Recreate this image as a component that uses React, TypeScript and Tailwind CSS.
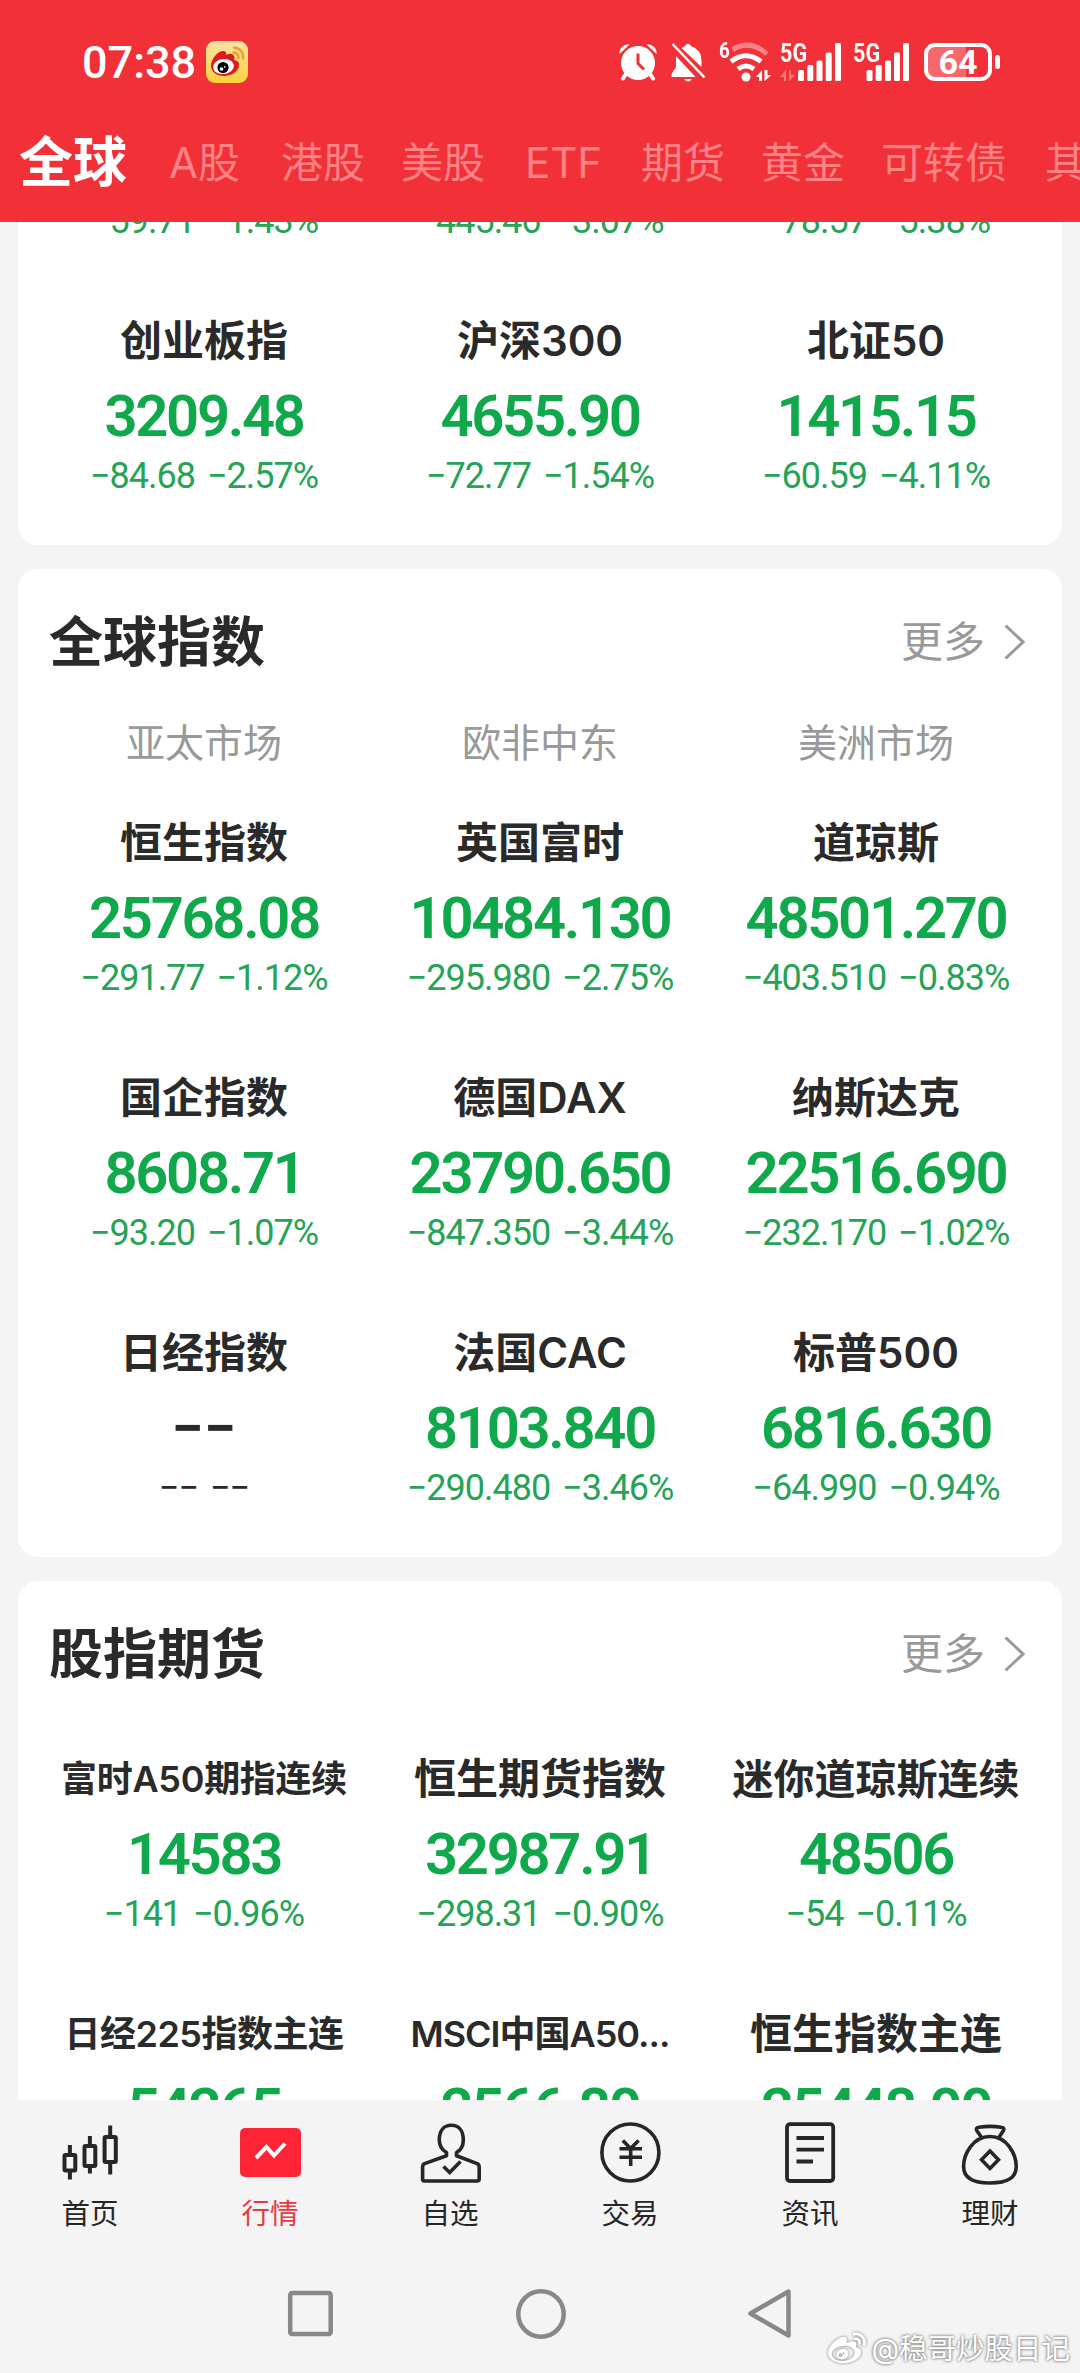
import type { ReactNode } from 'react'
import { FaWeibo } from 'react-icons/fa'

type Quote = {
  name: string
  price: string
  change: string
  nameClass?: string
  flat?: boolean
}

type NavItem = {
  label: string
  icon: ReactNode
  active?: boolean
}

const tabs = [
  { label: 'A股', className: 'w-[112px]' },
  { label: '港股', className: 'w-[120px]' },
  { label: '美股', className: 'w-[124px]' },
  { label: 'ETF', className: 'w-[116px]' },
  { label: '期货', className: 'w-[120px]' },
  { label: '黄金', className: 'w-[120px]' },
  { label: '可转债', className: 'w-[164px]' },
  { label: '其', className: 'w-[42px]' },
]

// row scrolled under the header, only its last line is visible
const hiddenRowChanges = ['−59.71 −1.43%', '−445.46 −3.07%', '−78.57 −5.38%']

const chinaQuotes: Quote[] = [
  { name: '创业板指', price: '3209.48', change: '−84.68 −2.57%' },
  { name: '沪深300', price: '4655.90', change: '−72.77 −1.54%' },
  { name: '北证50', price: '1415.15', change: '−60.59 −4.11%' },
]

const globalQuotes: Quote[] = [
  { name: '恒生指数', price: '25768.08', change: '−291.77 −1.12%' },
  { name: '英国富时', price: '10484.130', change: '−295.980 −2.75%' },
  { name: '道琼斯', price: '48501.270', change: '−403.510 −0.83%' },
  { name: '国企指数', price: '8608.71', change: '−93.20 −1.07%' },
  { name: '德国DAX', price: '23790.650', change: '−847.350 −3.44%' },
  { name: '纳斯达克', price: '22516.690', change: '−232.170 −1.02%' },
  { name: '日经指数', price: '−−', change: '−− −−', flat: true },
  { name: '法国CAC', price: '8103.840', change: '−290.480 −3.46%' },
  { name: '标普500', price: '6816.630', change: '−64.990 −0.94%' },
]

const futuresQuotes: Quote[] = [
  { name: '富时A50期指连续', price: '14583', change: '−141 −0.96%', nameClass: 'text-[36px] tracking-[-0.3px]' },
  { name: '恒生期货指数', price: '32987.91', change: '−298.31 −0.90%' },
  { name: '迷你道琼斯连续', price: '48506', change: '−54 −0.11%', nameClass: 'text-[41px]' },
  { name: '日经225指数主连', price: '54265', change: '', nameClass: 'text-[36px] tracking-[-0.5px]' },
  { name: 'MSCI中国A50...', price: '2566.80', change: '', nameClass: 'text-[36px] tracking-[-1px]' },
  { name: '恒生指数主连', price: '25448.00', change: '' },
]

const navItems: NavItem[] = [
  {
    label: '首页',
    icon: (
      <g strokeWidth="4">
        <rect x="7.5" y="35" width="10.8" height="15.5" rx="1" />
        <path d="M12.9 25v9M12.9 51v8.5" />
        <rect x="27.5" y="26" width="10.8" height="20" rx="1" />
        <path d="M32.9 16v9M32.9 47v6.5" />
        <rect x="47.6" y="17" width="11.2" height="25" rx="1" />
        <path d="M53.2 5.5V16M53.2 43v11.5" />
      </g>
    ),
  },
  {
    label: '行情',
    active: true,
    icon: (
      <g>
        <rect x="3" y="8" width="61" height="49" rx="5" fill="#ff2336" stroke="none" />
        <path d="M19 38L29.5 27l7.5 8.5L48 23.5" stroke="#fff" strokeWidth="4" />
      </g>
    ),
  },
  {
    label: '自选',
    icon: (
      <g strokeWidth="3.6" strokeLinejoin="round">
        <path d="M29.5 32.5v3.2L7.6 43.6Q5.6 44.6 5.6 47V59q0 2 2 2h52.6q2 0 2-2V47q0-2.4-2-3.4L39.5 35.7v-3.2C44 30 46.3 25 46.3 20C46.3 11 42 5.3 34.3 5.3S22.3 11 22.3 20C22.3 25 25 30 29.5 32.5Z" />
        <path d="M26.5 46.5L32.7 52.5L43.5 41.5" strokeLinejoin="miter" />
      </g>
    ),
  },
  {
    label: '交易',
    icon: (
      <g strokeWidth="3.6">
        <circle cx="33.4" cy="32.5" r="28.5" />
        <path d="M25.8 20.5l7.8 8l8-8M22.5 28.7h22.5M22.5 37.2h22.5M33.7 28v18" />
      </g>
    ),
  },
  {
    label: '资讯',
    icon: (
      <g strokeWidth="3.8">
        <rect x="10" y="4.2" width="46.2" height="56.8" rx="3" />
        <path d="M19.5 18H47M19.5 29.7H47M19.5 41.5H36" />
      </g>
    ),
  },
  {
    label: '理财',
    icon: (
      <g strokeWidth="3.6" strokeLinejoin="round">
        <path d="M25 18L19.7 10.5Q18.5 7.5 22 7.2Q33 5.5 44 7.2Q47.8 7.5 46.5 10.5L41.5 18" />
        <path d="M33 16.5C16 16.5 6.6 34 6.6 46.5C6.6 59 17 63 33 63S59.2 59 59.2 46.5C59.2 34 50 16.5 33 16.5Z" />
        <path d="M33 31L41.5 39.8L33 48.5L24.5 39.8Z" strokeLinejoin="miter" />
      </g>
    ),
  },
]

function SignalBars({ data }: { data?: boolean }) {
  const x = data ? [18, 27.3, 36.5, 45.7, 55] : [13.5, 22.7, 32, 41, 50]
  return (
    <div className={`relative h-10 ${data ? 'w-16' : 'w-[58px]'}`}>
      <svg width="64" height="40" viewBox="0 0 64 40" fill="#fff">
        {data && <path d="M6 39V28L0 35h4v4zM9 28v11l6-6h-4v-5z" opacity="0.35" />}
        <rect x={x[0]} y="28" width="6" height="11" rx="1.5" />
        <rect x={x[1]} y="23" width="6" height="16" rx="1.5" />
        <rect x={x[2]} y="18.5" width="6" height="20.5" rx="1.5" />
        <rect x={x[3]} y="10.5" width="6" height="28.5" rx="1.5" />
        <rect x={x[4]} y="1" width="6" height="38" rx="1.5" />
      </svg>
      <span className="absolute -top-1 left-0 origin-left scale-x-[0.83] font-['Roboto',sans-serif] text-[26px] font-bold leading-[30px] text-white">
        5G
      </span>
    </div>
  )
}

function StatusBar() {
  return (
    <div className="flex h-[124px] items-center pl-[82px] pr-[80px]">
      <span className="font-['Roboto',sans-serif] text-[45px] font-medium leading-none text-white">07:38</span>
      <svg width="42" height="42" viewBox="0 0 42 42" className="ml-[10px]">
        <defs>
          <linearGradient id="weiboBg" x1="0" y1="0" x2="0" y2="1">
            <stop offset="0" stopColor="#fbe3a6" />
            <stop offset="1" stopColor="#fdd23a" />
          </linearGradient>
        </defs>
        <rect width="42" height="42" rx="9" fill="url(#weiboBg)" />
        <path d="M5 25C5 17 13 9 18 10q3 1 2 4q6-3 8 1q1 2 0 4q6 1 5 6c-1 6-8 10-15 10S5 31 5 25Z" fill="#e0191d" />
        <ellipse cx="17.5" cy="25.5" rx="10.5" ry="7.5" fill="#fff" transform="rotate(-8 17.5 25.5)" />
        <circle cx="17" cy="26.5" r="5.6" fill="#000" />
        <circle cx="15.5" cy="28" r="1.8" fill="#fff" />
        <circle cx="18.8" cy="25.8" r="0.9" fill="#fff" />
        <path d="M28 6.5q9.5 1 9 11M27.5 11.5q5 .5 5 5.5" stroke="#f0a030" strokeWidth="2.5" fill="none" strokeLinecap="round" />
      </svg>
      <div className="ml-auto flex items-center">
        <svg width="38" height="38" viewBox="0 0 38 38" fill="#fff">
          <circle cx="19" cy="20" r="17" />
          <path d="M0.5 11Q0 7 3 4Q6.5 .5 10.5 1.5zM37.5 11Q38 7 35 4Q31.5 .5 27.5 1.5z" />
          <path d="M7 31l-3 4.5M31 31l3 4.5" stroke="#fff" strokeWidth="4" strokeLinecap="round" />
          <path d="M19 10.5V20.5l6 6" stroke="#f23037" strokeWidth="3" fill="none" />
        </svg>
        <svg width="36" height="40" viewBox="0 0 36 40" fill="#fff" className="ml-[14px]">
          <path d="M5 14v11L0.5 32v3h24zM10.5 6Q12.5 4.8 14 4q3-4.500 6 0Q30.5 7.5 30.5 19v6z" />
          <path d="M13 37h8q-4 5-8 0z" />
          <path d="M1.5 2l32 33.5" stroke="#fff" strokeWidth="2.5" />
        </svg>
        <div className="relative ml-3 h-10 w-[52px]">
          <svg width="54" height="40" viewBox="0 0 54 40" fill="none" stroke="#fff">
            <path d="M13.5 7.5Q31-3 48 12" strokeWidth="5" opacity="0.4" />
            <path d="M12 19.5Q27 8 42 19.5" strokeWidth="5" />
            <path d="M19 27Q27 21 35 27" strokeWidth="5" />
            <circle cx="27" cy="35" r="4.5" fill="#fff" stroke="none" />
            <path d="M43 39V28l-6 7h3v4zM45.5 28v11l7-6h-4v-5z" fill="#fff" stroke="none" />
          </svg>
          <span className="absolute -top-[5px] left-0 origin-left scale-x-[0.85] font-['Roboto',sans-serif] text-[22px] font-bold leading-[28px] text-white">
            6
          </span>
        </div>
        <div className="ml-[9px]">
          <SignalBars data />
        </div>
        <div className="ml-[9px]">
          <SignalBars />
        </div>
        <div className="ml-[13px] flex items-center gap-[3px]">
          <div className="flex h-[38px] w-[68px] items-center justify-center rounded-[11px] border-4 border-white bg-[linear-gradient(90deg,#f7686d_64%,transparent_64%)] font-['Roboto',sans-serif] text-[34px] font-bold leading-none text-white">
            64
          </div>
          <div className="h-[14px] w-[5px] rounded-sm bg-white" />
        </div>
      </div>
    </div>
  )
}

function Change({ value, flat }: { value: string; flat?: boolean }) {
  return (
    <div
      className={`flex h-[30px] items-center justify-center whitespace-nowrap pt-px font-['Roboto',sans-serif] text-[36px] leading-none tracking-[-1px] [word-spacing:4px] ${flat ? 'text-[#2a2a2a]' : 'text-[#26a356]'}`}
    >
      {value}
    </div>
  )
}

function QuoteCell({ quote }: { quote: Quote }) {
  return (
    <div className="flex h-[180px] flex-col items-center whitespace-nowrap">
      <div className={`flex h-[60px] items-center pt-[2px] font-semibold leading-none text-[#2a2a2a] ${quote.nameClass ?? 'text-[42px]'}`}>
        {quote.name}
      </div>
      <div
        className={`flex h-[90px] items-center pt-[2px] font-['Roboto',sans-serif] text-[58px] font-semibold leading-none ${quote.flat ? 'text-[#2a2a2a]' : 'tracking-[-2.3px] text-[#0fa84b]'}`}
      >
        {quote.price}
      </div>
      {quote.change && <Change value={quote.change} flat={quote.flat} />}
    </div>
  )
}

function QuoteGrid({ quotes }: { quotes: Quote[] }) {
  return (
    <div className="grid grid-cols-3 gap-y-[75px]">
      {quotes.map((q) => (
        <QuoteCell key={q.name} quote={q} />
      ))}
    </div>
  )
}

function SectionHeader({ title }: { title: string }) {
  return (
    <div className="flex h-[146px] items-center justify-between pl-[13px] pr-[19px]">
      <h2 className="pt-[2px] text-[54px] font-semibold leading-none text-[#2a2a2a]">{title}</h2>
      <div className="flex items-center text-[42px] leading-none text-[#999]">
        更多
        <svg width="21" height="36" viewBox="0 0 21 36" fill="none" stroke="#999" strokeWidth="3" className="ml-[19px]">
          <path d="M1.5 1.5L19 18L1.5 34.5" />
        </svg>
      </div>
    </div>
  )
}

export default function App() {
  return (
    <div className="relative flex h-[2373px] w-[1080px] flex-col overflow-hidden bg-[#f4f4f4] font-['Inter','Noto_Sans_CJK_SC',sans-serif]">
      <header className="h-[222px] shrink-0 overflow-hidden bg-[#f23037]">
        <StatusBar />
        <div className="flex h-[78px] items-center whitespace-nowrap pl-[19px] text-[42px] leading-none text-[#ff8286]">
          <span className="w-[150px] shrink-0 text-[54px] font-bold text-white">全球</span>
          {tabs.map((tab) => (
            <span key={tab.label} className={`shrink-0 ${tab.className}`}>
              {tab.label}
            </span>
          ))}
        </div>
      </header>

      <main className="h-[1878px] shrink-0 overflow-hidden px-[18px]">
        <section className="-mt-[17px] rounded-b-[20px] bg-white px-[18px] pb-[55px]">
          <div className="mb-[75px] grid grid-cols-3">
            {hiddenRowChanges.map((value) => (
              <Change key={value} value={value} />
            ))}
          </div>
          <QuoteGrid quotes={chinaQuotes} />
        </section>

        <section className="mt-6 rounded-[20px] bg-white px-[18px] pb-[55px]">
          <SectionHeader title="全球指数" />
          <div className="mb-[43px] grid h-[54px] grid-cols-3 items-center text-center text-[39px] leading-none text-[#999]">
            <span>亚太市场</span>
            <span>欧非中东</span>
            <span>美洲市场</span>
          </div>
          <QuoteGrid quotes={globalQuotes} />
        </section>

        <section className="mt-6 rounded-t-[20px] bg-white px-[18px] pb-[55px]">
          <SectionHeader title="股指期货" />
          <div className="mt-[21px]">
            <QuoteGrid quotes={futuresQuotes} />
          </div>
        </section>
      </main>

      <nav className="grid h-[150px] shrink-0 grid-cols-6 pt-5">
        {navItems.map((item) => (
          <div
            key={item.label}
            className={`flex flex-col items-center text-[28.5px] leading-none ${item.active ? 'text-[#e83a45]' : 'text-[#262626]'}`}
          >
            <svg width="66" height="66" viewBox="0 0 66 66" fill="none" stroke="#262626">
              {item.icon}
            </svg>
            <span className="mt-[14px]">{item.label}</span>
          </div>
        ))}
      </nav>

      <div className="flex h-[123px] shrink-0 items-center justify-between pl-[287px] pr-[288px] pt-[4px]">
        <svg width="47" height="50" viewBox="0 0 47 50" fill="none" stroke="#888" strokeWidth="4.5">
          <rect x="3.2" y="4" width="40.5" height="41" rx="2" />
        </svg>
        <svg width="50" height="50" viewBox="0 0 50 50" fill="none" stroke="#888" strokeWidth="4.5">
          <circle cx="25" cy="25" r="22.7" />
        </svg>
        <svg width="45" height="50" viewBox="0 0 45 50" fill="none" stroke="#888" strokeWidth="4.5" strokeLinejoin="round">
          <path d="M3.5 24.5L41.5 2.5V46.5Z" />
        </svg>
      </div>

      <div className="absolute bottom-[5px] right-[10px] flex items-center gap-[5px] text-[28.5px] leading-none text-white [text-shadow:0_0_3px_#777,0_0_3px_#999]">
        <FaWeibo className="size-[38px] drop-shadow-[0_0_1.5px_#777]" />
        <span>@稳哥炒股日记</span>
      </div>
    </div>
  )
}
